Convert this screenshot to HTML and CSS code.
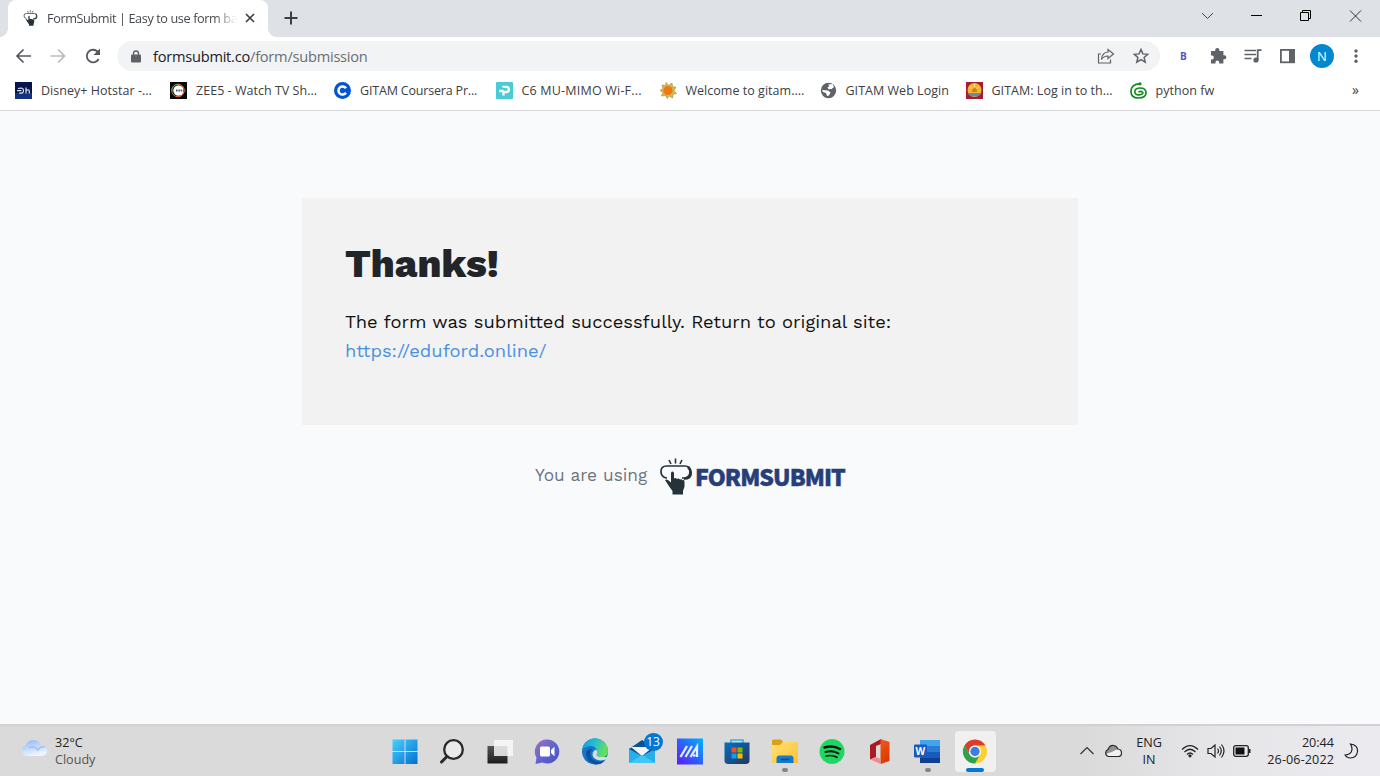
FILE: index.html
```html
<!DOCTYPE html>
<html lang="en">
<head>
<meta charset="utf-8">
<title>FormSubmit | Easy to use form backend</title>
<link rel="stylesheet" href="styles.css">
</head>
<body>
<svg width="0" height="0" class="defs">
  <defs>
    <symbol id="press" viewBox="0 0 32 37">
      <path d="M7 20H6.500Q1 19 1 13.500Q1 8 6.500 8H25Q30 8 30 13.500Q30 19 25 20H22" fill="none" stroke="#263238" stroke-width="1.700"/>
      <path d="M28 9Q31.500 12 30.500 17Q29 21 24 20.500" fill="none" stroke="#263238" stroke-width="2.500"/>
      <path d="M9 2l2 4M15.500 .5v5M22 2l-2 4" stroke="#263238" stroke-width="1.600"/>
      <path d="M11 15.500q0-2 1.500-2t1.500 2v5q1.500-1 3 .5q1.500-1 3 .5q1.500-1 2.500.7q2-.4 2 1.300v5l-1.500 4.500v3.500h-10.500v-3.500l-3-4-4.500-7q2-1.500 6 2.500z" fill="#263238"/>
    </symbol>
    <linearGradient id="gWin" x2="1" y2="1"><stop stop-color="#4bd0ff"/><stop offset="1" stop-color="#0070d0"/></linearGradient>
    <linearGradient id="gChat" x2="1" y2="1"><stop stop-color="#a073b8"/><stop offset=".5" stop-color="#6264d0"/><stop offset="1" stop-color="#4950b8"/></linearGradient>
    <linearGradient id="gEdge" x2="1" y2=".3"><stop stop-color="#1595d8"/><stop offset=".5" stop-color="#25bcd5"/><stop offset="1" stop-color="#65e05c"/></linearGradient>
    <linearGradient id="gAsus" x1="0" y1="1" x2="1" y2="0"><stop stop-color="#6418f8"/><stop offset=".5" stop-color="#2b62ff"/><stop offset="1" stop-color="#00b2ff"/></linearGradient>
    <linearGradient id="gStore" x2="1" y2="1"><stop stop-color="#086fc0"/><stop offset="1" stop-color="#25375c"/></linearGradient>
    <linearGradient id="gFold" x2="1" y2="1"><stop stop-color="#ffe07a"/><stop offset="1" stop-color="#ffc22d"/></linearGradient>
    <linearGradient id="gOff" x2=".3" y2="1"><stop stop-color="#f05a20"/><stop offset="1" stop-color="#d83b01"/></linearGradient>
    <linearGradient id="gCloud" x2=".4" y2="1"><stop stop-color="#8fb6f2"/><stop offset="1" stop-color="#edf4ff"/></linearGradient>
    <linearGradient id="gDark" x2="0" y2="1"><stop stop-color="#555"/><stop offset="1" stop-color="#1c1c1c"/></linearGradient>
  </defs>
</svg>

<div class="tabstrip">
  <div class="tab">
    <svg class="tab-icon" width="15" height="16"><use href="#press"/></svg>
    <span class="tab-title">FormSubmit | Easy to use form ba</span>
    <svg class="tab-close" width="10" height="10" viewBox="0 0 10 10"><path d="M1 1l8 8M9 1l-8 8" stroke="#3c4043" stroke-width="1.700"/></svg>
  </div>
  <svg class="newtab" width="14" height="14" viewBox="0 0 14 14"><path d="M7 .5v13M.5 7h13" stroke="#3c4043" stroke-width="2"/></svg>
  <div class="wincontrols">
    <svg width="50" height="32" viewBox="0 0 50 32"><path d="M20 13l5.500 5.500L31 13" fill="none" stroke="#444"/></svg>
    <svg width="50" height="32" viewBox="0 0 50 32"><path d="M19 15.500h11" stroke="#000"/></svg>
    <svg width="50" height="32" viewBox="0 0 50 32"><path d="M18.500 12.500h8v8h-8zM20.500 12.500v-2h8v8h-2" fill="none" stroke="#000"/></svg>
    <svg width="48" height="32" viewBox="0 0 48 32"><path d="M18 10.500l11 11M29 10.500l-11 11" stroke="#333"/></svg>
  </div>
</div>

<div class="toolbar">
  <svg class="nav" width="35" height="24" viewBox="0 0 35 24"><path d="M25 12H11.500M17.500 5.500L11 12l6.500 6.500" fill="none" stroke="#54585c" stroke-width="1.700"/></svg>
  <svg class="nav" width="35" height="24" viewBox="0 0 35 24"><path d="M9.500 12H23M17 5.500l6.500 6.500-6.500 6.500" fill="none" stroke="#b9bbbe" stroke-width="1.700"/></svg>
  <svg class="nav" width="35" height="24" viewBox="0 0 35 24"><path d="M22.700 15A6.300 6.300 0 1 1 21.500 7.500" fill="none" stroke="#54585c" stroke-width="1.800"/><path d="M24 4.500v6.500h-6.500z" fill="#54585c"/></svg>
  <div class="omnibox">
    <svg width="10" height="13" viewBox="0 0 10 13"><rect y="4.500" width="10" height="8" rx="1" fill="#5f6368"/><path d="M2.500 5V3.500a2.500 2.500 0 0 1 5 0V5" fill="none" stroke="#5f6368" stroke-width="1.300"/></svg>
    <span class="url"><b>formsubmit.co</b>/form/submission</span>
    <svg class="share" width="18" height="18" viewBox="0 0 18 18"><path d="M4 7H1.500v9h12v-3.500M11 2.500l5.500 4.500-5.500 4.500V9Q6.500 9 4.500 12.500 5 5.500 11 5z" fill="none" stroke="#5f6368" stroke-width="1.200"/></svg>
    <svg class="star" width="16" height="16" viewBox="0 0 16 16"><path d="M8 1.500l1.900 4.400 4.800.4-3.600 3.100 1.100 4.700L8 11.600l-4.200 2.500 1.100-4.700L1.300 6.300l4.800-.4z" fill="none" stroke="#5f6368" stroke-width="1.500"/></svg>
  </div>
  <div class="actions">
    <span class="ext">B</span>
    <svg width="34" height="20" viewBox="0 0 34 20"><path d="M9 5h4.200V4q0-2 2.100-2t2.100 2v1h4v4.300h1q2 0 2 2t-2 2h-1V17.500h-4.200v-1q0-1.900-1.900-1.900T13.500 16.500v1H9V13.500h1.300q1.500-.2 1.500-2t-1.500-2H9z" fill="#5f6368"/></svg>
    <svg width="35" height="20" viewBox="0 0 35 20"><path d="M8.500 4.500h11.500M8.500 8.500h11.500M8.500 12.500h7" stroke="#5f6368" stroke-width="1.600"/><path d="M21.700 14V4.200H25.500" fill="none" stroke="#5f6368" stroke-width="1.800"/><circle cx="20" cy="14" r="2.600" fill="#5f6368"/></svg>
    <svg width="35" height="20" viewBox="0 0 35 20"><rect x="9.900" y="3.900" width="13.200" height="12.400" fill="none" stroke="#5f6368" stroke-width="1.800"/><path d="M18 4h5v12h-5z" fill="#5f6368"/></svg>
    <span class="avatar">N</span>
    <svg width="44" height="20" viewBox="0 0 44 20"><g fill="#5f6368"><circle cx="22" cy="5" r="1.700"/><circle cx="22" cy="10" r="1.700"/><circle cx="22" cy="15.200" r="1.700"/></g></svg>
  </div>
</div>

<div class="bookmarks">
  <div class="bm w155"><svg width="17" height="17" viewBox="0 0 17 17"><path d="M0 0h17v17H0z" fill="#07144c"/><path d="M0 11h17v6H0z" fill="#15317c"/><path d="M3 6.500q5.500-1.500 5.500 2T4 11M2 8.700h4.500M11 5.500V11.500M11 9q3-2.500 3.300 0v2.500" fill="none" stroke="#d6e6ff" stroke-width="1.200"/></svg><span>Disney+ Hotstar -...</span></div>
  <div class="bm w164"><svg width="17" height="17" viewBox="0 0 17 17"><path d="M0 0h17v17H0z" fill="#080808"/><circle cx="8" cy="8.500" r="6.300" fill="none" stroke="#e87035" stroke-width="1"/><path d="M8 2.200a6.300 6.300 0 0 0-6 7" fill="none" stroke="#3bb16c"/><circle cx="8.500" cy="8.500" r="5.200" fill="#fff"/><path d="M6 8.500h10" stroke="#555" stroke-width="2" stroke-dasharray="1.500 .8"/></svg><span>ZEE5 - Watch TV Sh...</span></div>
  <div class="bm w162 tight"><svg width="17" height="17" viewBox="0 0 17 17"><circle cx="8.500" cy="8.500" r="8.500" fill="#0056d2"/><path d="M12 10.800a4.100 4.100 0 1 1 0-4.600" fill="none" stroke="#fff" stroke-width="2.500"/></svg><span>GITAM Coursera Pr...</span></div>
  <div class="bm w164 wide"><svg width="17" height="17" viewBox="0 0 17 17"><rect width="17" height="17" rx="1" fill="#4acbd6"/><path d="M3 9h4.500M7.500 5.500V4.800h2.800a2.600 2.600 0 0 1 0 5.200H7.500v3.500" fill="none" stroke="#fff" stroke-width="2.300"/></svg><span>C6 MU-MIMO Wi-F...</span></div>
  <div class="bm w160"><svg width="17" height="17" viewBox="0 0 17 17"><path d="M6 .5l2.500 3L12 1l.5 3.700 3.500.5L14 8.500l2.500 3-3.500.8-.3 3.700-3.500-2-2 2.500-1.700-3-4 .5L3 10.500 0 8.500l3-2L2 3l3.700.5z" fill="#d9b84c" stroke="#9c8b35" stroke-width=".6"/><circle cx="8" cy="8.500" r="4.600" fill="#ee7814"/></svg><span>Welcome to gitam....</span></div>
  <div class="bm w146"><svg width="17" height="17" viewBox="0 0 17 17"><circle cx="8.500" cy="8.500" r="7.700" fill="#5f6368"/><path d="M8 2.500l4.500-.5 1.500 3-2.500 2-3 .3-1-2 2-1zM2 8l6 .5 2.500 2-1.500 3-2 .5-1-3-3-1z" fill="#fff"/></svg><span>GITAM Web Login</span></div>
  <div class="bm w164"><svg width="17" height="17" viewBox="0 0 17 17"><path d="M0 0h17v17H0z" fill="#a51c35"/><circle cx="8.500" cy="8" r="7" fill="#f3b52f"/><path d="M1.500 11h14a7.500 5.500 0 0 1-14 0" fill="#5a8dbb"/><path d="M6 10q0-4 2.500-4t2.500 4z" fill="#c9801d"/><path d="M8.500 2v3M4 4.500l2 2M13 4.500l-2 2" stroke="#ffe680"/></svg><span>GITAM: Log in to th...</span></div>
  <div class="bm"><svg width="17" height="17" viewBox="0 0 17 17"><path d="M10 1.800Q1 2 1 9.500Q1 16 8.500 16T16 10.800Q16 6 10.300 6Q4.800 6 4.800 9.500T9 12.800T12.800 10.500Q11 8.500 8.500 10" fill="none" stroke="#138a22" stroke-width="1.700"/><circle cx="10" cy="1.800" r="1.600" fill="#138a22"/></svg><span>python fw</span></div>
  <span class="more">»</span>
</div>

<main class="page">
  <section class="card">
    <h1>Thanks!</h1>
    <p>The form was submitted successfully. Return to original site:</p>
    <a>https://eduford.online/</a>
  </section>
  <footer class="credit">
    <span class="using">You are using</span>
    <svg class="logo" width="32" height="37"><use href="#press"/></svg>
    <span class="brand">FORMSUBMIT</span>
  </footer>
</main>

<div class="taskbar">
  <div class="weather">
    <svg width="28" height="18" viewBox="0 0 28 18"><path d="M6 17a5.500 5.500 0 0 1-.5-10.500Q8 1 13.500 1q6 0 7.500 5.500 6 .5 6 5.500t-6 5z" fill="url(#gCloud)"/><path d="M9 9q5-3 9 2 2-4 7-3" fill="none" stroke="#a4c2f1" stroke-width="1.500"/></svg>
    <div class="wtext"><span>32°C</span><span class="dim">Cloudy</span></div>
  </div>
  <div class="apps">
    <div class="app"><svg viewBox="0 0 28 28"><path d="M1.500 2.500h12v11.500h-12zM14.500 2.500h12v11.500h-12zM1.500 15h12v12h-12zM14.500 15h12v12h-12z" fill="url(#gWin)"/></svg></div>
    <div class="app"><svg viewBox="0 0 28 28"><circle cx="15.500" cy="12.500" r="9.300" fill="#e7e9ea" stroke="#292929" stroke-width="2.300"/><path d="M9 19.500l-5.500 5.500" stroke="#292929" stroke-width="3" stroke-linecap="round"/></svg></div>
    <div class="app"><svg viewBox="0 0 28 28"><path d="M1.500 9h20v17.500h-20z" fill="url(#gDark)"/><path d="M8 3h19v16H8z" fill="#fafafa" opacity=".82"/></svg></div>
    <div class="app"><svg viewBox="0 0 28 28"><path d="M14.500 2.500a12 12 0 1 1-5 23L2.500 27l1-6.500A12 12 0 0 1 14.500 2.500" fill="url(#gChat)"/><rect x="7" y="9.500" width="10" height="10" rx="1.500" fill="#fff"/><path d="M18 13l3.500-3.300v9.600L18 16z" fill="#fff"/></svg></div>
    <div class="app"><svg viewBox="0 0 28 28"><circle cx="14" cy="14.500" r="13" fill="#1575c8"/><path d="M1.200 12A13 13 0 0 1 27 14q0 6-6 6-4.500 0-5.500-2 2-5-2-8T1.200 12" fill="url(#gEdge)"/><path d="M11 12q-4 6 1 10.500 5 4 12.500.5-4 5-10 4.500Q5 25 5 17q0-5 6-5" fill="#0c50a0"/><path d="M14.500 12.500q3 1.500 1 5.500 1 2 5.500 2h5q-1 2-2.500 3-7 1.500-10.500-2-3.500-4.500 1.500-8.500" fill="#dadcde"/></svg></div>
    <div class="app"><svg viewBox="0 0 28 28"><path d="M1 12L14 3l13 9v14H1z" fill="#08529c"/><path d="M3 10h22L14 19z" fill="#f6f6f6"/><path d="M1 12l13 7 13-7v14H1z" fill="#28aee8"/><path d="M1 26l13-8 13 8z" fill="#40c8f4"/></svg><span class="badge">13</span></div>
    <div class="app"><svg viewBox="0 0 28 28"><path d="M1 1.500h26v26H1z" fill="url(#gAsus)"/><path d="M4.500 20l6.500-11M9.500 20l6.500-11M14.500 20l6.500-10.500v10.500" fill="none" stroke="#e6eaff" stroke-width="2.300"/><path d="M17 18.500h2.500" stroke="#fff" stroke-width="2"/></svg></div>
    <div class="app"><svg viewBox="0 0 28 28"><path d="M8 7V3h12v4" fill="none" stroke="#29b6ed" stroke-width="1.600"/><path d="M1.500 5.500h25v18q0 3.500-3.500 3.500H5q-3.500 0-3.500-3.500z" fill="url(#gStore)"/><path d="M8.500 10.500h5v5h-5z" fill="#f25022"/><path d="M14.500 10.500h5v5h-5z" fill="#7fba00"/><path d="M8.500 16.500h5v5h-5z" fill="#00a4ef"/><path d="M14.500 16.500h5v5h-5z" fill="#ffb900"/></svg></div>
    <div class="app"><svg viewBox="0 0 28 28"><path d="M1 8V4q0-1.500 1.500-1.500H10l2.500 3V10z" fill="#dca012"/><path d="M1 8h8l3-3h13.500q1.500 0 1.500 1.500V26H1z" fill="url(#gFold)"/><path d="M5.500 26v-4.500q0-3 3-3h11q3 0 3 3V26z" fill="#147ac9"/><path d="M9.500 22.500h9" stroke="#0a4f90" stroke-width="1.500"/></svg><i class="dot"></i></div>
    <div class="app"><svg viewBox="0 0 28 28"><circle cx="14" cy="14.500" r="12.500" fill="#1ed760"/><g fill="none" stroke="#0b160e" stroke-linecap="round"><path d="M6.500 10.500q8.500-2.500 15.500 1.500" stroke-width="2.500"/><path d="M7.500 15q7-2 13 1.500" stroke-width="2"/><path d="M8 19q6-1.500 11 1.300" stroke-width="1.700"/></g></svg></div>
    <div class="app"><svg viewBox="0 0 28 28"><path d="M4 8L15 2v5L10 9v11l-6 2.500z" fill="#a91a22"/><path d="M14.500 2l9 3v19l-9 3z" fill="url(#gOff)"/><path d="M4.500 22.500l5.500-2.500 4.500 2V27z" fill="#f08a91"/></svg></div>
    <div class="app"><svg viewBox="0 0 28 28"><path d="M7 3h20v6H7z" fill="#41a5ee"/><path d="M7 9h20v6H7z" fill="#2b7cd3"/><path d="M7 15h20v6H7z" fill="#185abd"/><path d="M7 21h20v5H7z" fill="#103f91"/><rect x="1" y="7.500" width="13" height="13" rx="1" fill="#185abd"/></svg><span class="wletter">W</span><i class="dot"></i></div>
    <div class="app active"><svg viewBox="0 0 28 28"><circle cx="14" cy="14.500" r="12" fill="#ffcf32"/><path d="M3.600 8.500A12 12 0 0 1 24.400 8.500H14a6 6 0 0 0-5.200 9z" fill="#de3b30"/><path d="M3.600 8.500A12 12 0 0 0 14 26.500l5.200-9a6 6 0 0 1-10.400 0z" fill="#2ba24c"/><circle cx="14" cy="14.500" r="6" fill="#fff"/><circle cx="14" cy="14.500" r="4.700" fill="#3c7de6"/></svg><i class="dot on"></i></div>
  </div>
  <div class="tray">
    <svg width="16" height="16" viewBox="0 0 16 16"><path d="M1.500 11L8 4.500l6.500 6.500" fill="none" stroke="#333" stroke-width="1.200"/></svg>
    <svg class="onedrive" width="18" height="14" viewBox="0 0 18 14"><path d="M4.500 12.500a3.700 3.700 0 0 1-.5-7Q6 1 9.500 1.500q3 .2 4.300 3.500 3.700.5 3.700 4t-3.500 3.500z" fill="#f2f2f2"/><path d="M2 10q-1-4 2-4.500Q6 1 9.500 1.500q3 .2 4.300 3.500l-5 2.500z" fill="#929292"/><path d="M4.500 12.500a3.700 3.700 0 0 1-.5-7Q6 1 9.500 1.500q3 .2 4.300 3.500 3.700.5 3.700 4t-3.500 3.500z" fill="none" stroke="#282828" stroke-width="1.200"/></svg>
    <div class="lang"><span>ENG</span><span>IN</span></div>
    <svg class="wifi" width="18" height="14" viewBox="0 0 18 14"><g fill="none" stroke="#222" stroke-width="1.200"><path d="M1 5.500q8-8 16 0M3.500 8q5.500-5.500 11 0M6 10.500q3-3 6 0"/></g><circle cx="9" cy="11.800" r="1.600" fill="#222"/></svg>
    <svg class="vol" width="18" height="16" viewBox="0 0 18 16"><g fill="none" stroke="#222" stroke-width="1.200"><path d="M1 5.500h3L8 2v12l-4-3.500H1zM10.500 5.500q2 2.500 0 5M12.500 3.500q3.500 4.500 0 9M14.500 1.500q5 6.500 0 13"/></g></svg>
    <svg class="bat" width="18" height="12" viewBox="0 0 18 12"><rect x=".7" y=".7" width="14.600" height="10.600" rx="2" fill="none" stroke="#222" stroke-width="1.300"/><path d="M2.500 2.500h9v7h-9z" fill="#111"/><path d="M16 4h1.500v4H16z" fill="#222"/></svg>
    <div class="clock"><span>20:44</span><span class="date">26-06-2022</span></div>
    <svg class="moon" width="15" height="16" viewBox="0 0 15 16"><path d="M6.500 1Q14 2 13.500 8.500 12.500 15 6.500 15 3 15 1 12 7.500 11.500 8 6.500 8 3.500 6.500 1z" fill="none" stroke="#222" stroke-width="1.200"/></svg>
  </div>
</div>
</body>
</html>
```
FILE: styles.css
```css
* { box-sizing: border-box; }
body {
  margin: 0;
  width: 1380px;
  height: 776px;
  overflow: hidden;
  display: flex;
  flex-direction: column;
  background: #f9fafc;
  font-family: "Open Sans", "Noto Sans", sans-serif;
  color: #3c4043;
}
svg { flex: none; display: block; }
span { white-space: nowrap; }
.defs { position: absolute; }

/* Tab strip */
.tabstrip { height: 37px; flex: none; background: #dee1e6; display: flex; }
.tab {
  width: 260px;
  margin-left: 8px;
  background: #fff;
  border-radius: 8px 8px 0 0;
  display: flex;
  align-items: center;
  padding-left: 15px;
  position: relative;
}
.tab::before, .tab::after {
  content: "";
  position: absolute;
  bottom: 0;
  width: 8px;
  height: 8px;
}
.tab::before { left: -8px; background: radial-gradient(circle at 0 0, #dee1e6 7.5px, #fff 8px); }
.tab::after { right: -8px; background: radial-gradient(circle at 100% 0, #dee1e6 7.5px, #fff 8px); }
.tab-icon { margin-top: -1px; }
.tab-title {
  width: 190px;
  margin: -2px 0 0 9px;
  font-size: 12.7px;
  letter-spacing: -0.4px;
  color: #45494d;
  -webkit-mask-image: linear-gradient(90deg, #000 168px, transparent 190px);
  mask-image: linear-gradient(90deg, #000 168px, transparent 190px);
}
.tab-close { margin: -1px 0 0 8px; }
.newtab { margin: 11px 0 0 16px; }
.wincontrols { margin-left: auto; display: flex; }

/* Toolbar */
.toolbar { height: 37px; flex: none; background: #fff; display: flex; align-items: center; padding-left: 6px; }
.nav { margin-top: 1px; }
.omnibox {
  width: 1043px;
  height: 30px;
  margin: 1px 0 0 6px;
  border-radius: 15px;
  background: #f1f3f4;
  display: flex;
  align-items: center;
  padding-left: 14px;
}
.url { margin-left: 12px; font-size: 14.6px; letter-spacing: -0.23px; color: #6a6e73; }
.url b { font-weight: 400; color: #202124; }
.share { margin-left: auto; }
.star { margin: 0 11px 0 18px; }
.actions { display: flex; align-items: center; margin-top: 1px; }
.ext { width: 42px; padding-left: 20px; font: 700 10px "Open Sans", sans-serif; color: #5652c0; }
.avatar {
  width: 24px;
  height: 24px;
  margin-left: 4px;
  border-radius: 50%;
  background: #0288d1;
  color: #fff;
  font-size: 13px;
  line-height: 24px;
  text-align: center;
}

/* Bookmarks */
.bookmarks {
  height: 37px;
  flex: none;
  background: #fff;
  border-bottom: 1px solid #d5d7da;
  display: flex;
  align-items: center;
  padding: 0 21px 4px 15px;
}
.bm { display: flex; align-items: center; gap: 9px; font-size: 12.5px; letter-spacing: 0.03px; }
.tight { letter-spacing: -0.18px; }
.wide { letter-spacing: 0.2px; }
.w146 { width: 146px; }
.w155 { width: 155px; }
.w160 { width: 160px; }
.w162 { width: 161.500px; }
.w164 { width: 164px; }
.more { margin-left: auto; font-size: 14px; line-height: 14px; }

/* Page */
.page { flex: 1; display: flex; flex-direction: column; align-items: center; padding-top: 87px; }
.card { width: 776px; height: 227px; background: #f2f2f2; padding: 42px 43px; font-family: "Work Sans", Inter, sans-serif; }
h1 { margin: 0; font-size: 38.7px; line-height: 48px; font-weight: 800; color: #212529; }
p { margin: 19px 0 0; font-size: 18.35px; line-height: 29px; color: #111; white-space: nowrap; }
.card a { font-size: 18.35px; line-height: 29px; color: #4a90e2; display: block; }
.credit { width: 776px; display: flex; align-items: center; padding: 33px 0 0 233px; }
.using { width: 125px; margin-top: -4px; font: 17.3px "Work Sans", Inter, sans-serif; color: #6c757d; }
.brand {
  margin: -2px 0 0 3px;
  font: 900 23px/30px "Noto Sans CJK JP", "Noto Sans", sans-serif;
  letter-spacing: -0.95px;
  -webkit-text-stroke: 0.5px #263f78;
  color: #263f78;
}

/* Taskbar */
.taskbar {
  height: 52px;
  flex: none;
  border-top: 2px solid #d0d1d2;
  background: linear-gradient(90deg, #dadada 0 1080px, #e6e6e9 1220px, #ebebef 1380px);
  display: flex;
  color: #222;
}
.weather { width: 381px; display: flex; padding: 13px 0 0 20px; gap: 7px; }
.wtext { display: flex; flex-direction: column; margin-top: -5px; font-size: 12.6px; line-height: 17px; }
.dim { color: #555; }
.apps { display: flex; padding-top: 5px; }
.app { position: relative; width: 47.5px; height: 42px; display: flex; justify-content: center; padding-top: 6px; }
.app > svg { width: 28px; height: 28px; }
.active::before {
  content: "";
  position: absolute;
  inset: 0 3px 1px 4px;
  border-radius: 4px;
  background: #f0f0f0;
}
.active > svg { position: relative; }
.dot { position: absolute; left: 21px; bottom: 1px; width: 6px; height: 4px; border-radius: 2px; background: #858585; }
.on { left: 15px; width: 18px; background: #0078d4; }
.badge {
  position: absolute;
  left: 25px;
  top: 2px;
  width: 19px;
  height: 18px;
  border-radius: 9px;
  background: #0078d4;
  color: #fff;
  font-size: 12px;
  line-height: 17px;
  text-align: center;
}
.wletter { position: absolute; left: 12px; top: 14px; font-size: 10px; line-height: 12px; font-weight: 700; color: #fff; }
.tray { flex: 1; display: flex; align-items: center; padding-left: 80.5px; }
.onedrive { margin-left: 9px; }
.lang, .clock { display: flex; flex-direction: column; line-height: 17px; margin-top: -1px; }
.lang { width: 30px; margin-left: 12px; text-align: center; font-size: 12.6px; }
.wifi { margin-left: 17px; }
.vol { margin-left: 8px; }
.bat { margin-left: 8px; }
.clock { width: 70px; margin-left: 13px; align-items: flex-end; font-size: 12.6px; }
.date { letter-spacing: 0.1px; }
.moon { margin-left: 10px; }
```
